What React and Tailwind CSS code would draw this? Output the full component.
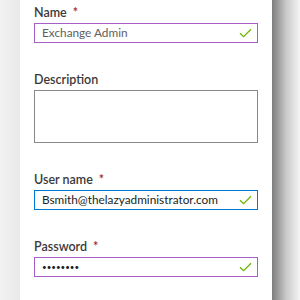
import React from 'react';

// small green tick shown at the right of a valid field
function Check() {
    return (
        <svg width="13" height="10" viewBox="0 0 13 10" className="shrink-0">
            <path d="M1 5.2 L4.6 8.6 L12 1.2" fill="none" stroke="#6bb700" strokeWidth="1.3" />
        </svg>
    );
}

function Label({ text, required }) {
    return (
        <div className="h-[18px] leading-[18px] mb-px text-[12.5px] font-semibold text-[#3b3a39]">
            {text}
            {required && <span className="ml-[6px] text-[#a4262c]">*</span>}
        </div>
    );
}

function Field({ label, value, border, textColor, password }) {
    return (
        <div>
            <Label text={label} required />
            <div className={`h-[20px] w-[224px] flex items-center pl-[7px] pr-[5px] bg-white ${border}`}>
                <span
                    className={`flex-1 whitespace-nowrap overflow-visible leading-[18px] ${textColor} ${password ? 'text-[8px]' : 'text-[11.8px]'}`}
                >
                    {value}
                </span>
                <Check />
            </div>
        </div>
    );
}

export default function App() {
    return (
        <div className="flex w-[300px] h-[300px] bg-[#f3f3f3]" style={{ fontFamily: 'Lato, "Noto Sans", sans-serif' }}>
            <div className="w-[20px] bg-gradient-to-r from-[#f2f2f2] to-[#e9e9e9]" />
            <div className="w-[252px] bg-white pl-[14px] pt-[4px] flex flex-col gap-[28px]">
                <Field
                    label="Name"
                    value="Exchange Admin"
                    border="border-[1.5px] border-[#a55fc6]"
                    textColor="text-[#605e5c]"
                />
                <div>
                    <Label text="Description" />
                    <div className="h-[53px] w-[224px] border border-[#8a8886] bg-white" />
                </div>
                <Field
                    label="User name"
                    value="Bsmith@thelazyadministrator.com"
                    border="border-[1.5px] border-[#0078d4]"
                    textColor="text-[#201f1e]"
                />
                <Field
                    label="Password"
                    value="••••••••"
                    border="border-[1.5px] border-[#a55fc6]"
                    textColor="text-[#201f1e]"
                    password
                />
            </div>
            <div className="flex-1 bg-gradient-to-r from-[#7d7d7d] via-[#c9c9c9] to-[#f5f5f5]" />
        </div>
    );
}
